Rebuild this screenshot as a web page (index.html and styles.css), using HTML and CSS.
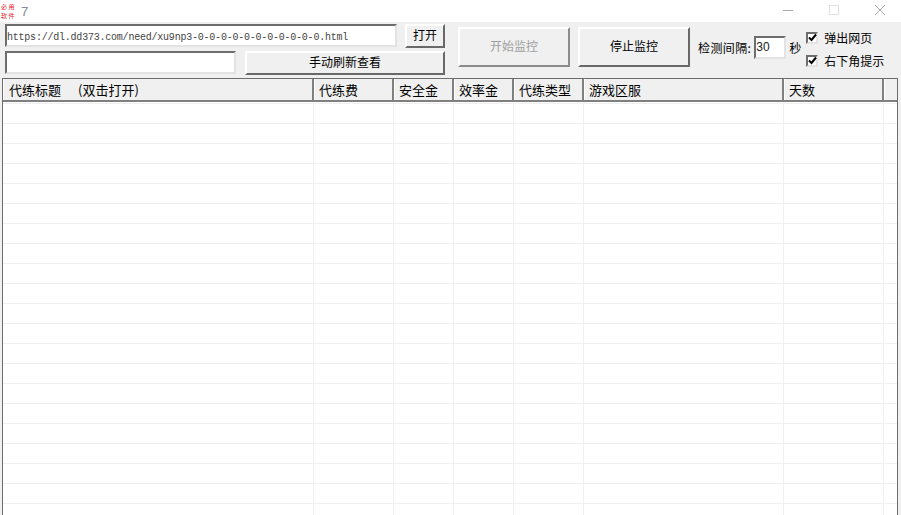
FILE: index.html
```html
<!DOCTYPE html>
<html lang="zh">
<head>
<meta charset="utf-8">
<title>7</title>
<link rel="stylesheet" href="styles.css">
</head>
<body>
<div class="window">
  <header class="titlebar">
    <div class="app-title">
      <div class="app-icon"><span>必用</span><span>软件</span></div>
      <span class="app-name">7</span>
    </div>
    <div class="caption">
      <svg width="12" height="12" viewBox="0 0 12 12" stroke="#a8a8a8" fill="none"><path d="M1 6.500h10"/></svg>
      <svg width="12" height="12" viewBox="0 0 12 12" stroke="#e0e0e0" fill="none"><rect x="1.500" y="1.500" width="9" height="9"/></svg>
      <svg width="12" height="12" viewBox="0 0 12 12" stroke="#a8a8a8" fill="none"><path d="M1 1l10 10M11 1L1 11"/></svg>
    </div>
  </header>

  <section class="toolbar">
    <div class="url-group">
      <div class="tool-row">
        <input class="field field-url" type="text" value="https://dl.dd373.com/need/xu9np3-0-0-0-0-0-0-0-0-0-0-0.html">
        <button class="btn btn-open">打开</button>
      </div>
      <div class="tool-row">
        <input class="field field-search" type="text">
        <button class="btn btn-refresh">手动刷新查看</button>
      </div>
    </div>
    <button class="btn btn-big btn-start" disabled>开始监控</button>
    <button class="btn btn-big btn-stop">停止监控</button>
    <div class="interval">
      <span class="interval-label">检测间隔:</span>
      <input class="field field-sec" type="text" value="30">
      <span>秒</span>
    </div>
    <div class="checks">
      <label class="check"><span class="box"><svg width="9" height="9" viewBox="0 0 9 9" fill="none" stroke="#000" stroke-width="2"><path d="M1 4.500l2.500 2.500L8 1.500"/></svg></span>弹出网页</label>
      <label class="check"><span class="box"><svg width="9" height="9" viewBox="0 0 9 9" fill="none" stroke="#000" stroke-width="2"><path d="M1 4.500l2.500 2.500L8 1.500"/></svg></span>右下角提示</label>
    </div>
  </section>

  <section class="list">
    <div class="list-head">
      <div class="hcell c1">代练标题　<span class="hint">(双击打开)</span></div>
      <div class="hcell c2">代练费</div>
      <div class="hcell c3">安全金</div>
      <div class="hcell c4">效率金</div>
      <div class="hcell c5">代练类型</div>
      <div class="hcell c6">游戏区服</div>
      <div class="hcell c7">天数</div>
      <div class="hcell c8"></div>
    </div>
    <div class="list-body"></div>
  </section>
</div>
</body>
</html>
```
FILE: styles.css
```css
* { box-sizing: border-box; }
html, body { margin: 0; height: 100%; overflow: hidden; }
body {
  font-family: "Noto Sans CJK SC", "Liberation Sans", sans-serif;
  font-size: 12px;
  color: #000;
  background: #f0f0f0;
}
.window { display: flex; flex-direction: column; height: 515px; }

.titlebar {
  height: 22px;
  background: #fff;
  display: flex;
  justify-content: space-between;
  align-items: center;
  flex: none;
}
.app-title { display: flex; align-items: center; padding-left: 1px; }
.app-icon {
  width: 16px;
  height: 18px;
  display: flex;
  flex-direction: column;
  color: #e8141c;
  font-size: 6px;
  line-height: 9px;
  letter-spacing: 1.500px;
  font-family: "Noto Sans CJK SC", sans-serif;
  text-align: left;
  white-space: nowrap;
}
.app-name { margin-left: 4px; font-size: 13px; color: #7f8a96; font-family: "Liberation Sans", sans-serif; }
.caption { display: flex; gap: 34px; padding-right: 15px; margin-top: -3px; }
.caption svg { display: block; }

.toolbar {
  height: 56px;
  flex: none;
  display: flex;
  padding: 2px 0 0 5px;
  background: #f0f0f0;
}
.url-group { width: 440px; display: flex; flex-direction: column; gap: 2px; }
.tool-row { display: flex; justify-content: space-between; height: 24px; }

.field {
  border: 2px solid;
  border-color: #6d6d6d #e3e3e3 #e3e3e3 #6d6d6d;
  background: #fff;
  padding: 3px 0 0 0;
  margin: 0;
  outline: 0;
  font-size: 10px;
  letter-spacing: -0.220px;
  font-family: "Liberation Mono", monospace;
  color: #444;
  height: 23px;
  border-radius: 0;
}
.field-url { width: 392px; }
.field-search { width: 231px; margin-top: 1px; }
.field-sec { width: 32px; height: 23px; font: 12px "Liberation Sans", sans-serif; letter-spacing: 0; color: #222; padding: 0; }

.btn {
  border: 2px solid;
  border-color: #fff #696969 #696969 #fff;
  background: #f0f0f0;
  padding: 0 0 3px;
  margin: 0;
  font-family: inherit;
  font-size: 12px;
  color: #000;
  border-radius: 0;
}
.btn-open { width: 40px; height: 24px; }
.btn-refresh { width: 200px; height: 24px; margin-top: 1px; }
.btn-big { width: 112px; height: 40px; margin-top: 3px; }
.btn-start { margin-left: 13px; color: #a0a0a0; border-color: #fff #8c8c8c #8c8c8c #fff; }
.btn-stop { margin-left: 8px; }

.interval { display: flex; align-items: center; height: 24px; margin: 11px 0 0 8px; }
.interval-label { letter-spacing: 0.400px; }
.interval .field-sec { margin: 0 3px 0 3px; }
.interval span { white-space: nowrap; }
.checks { display: flex; flex-direction: column; gap: 10px; margin: 7px 0 0 5px; }
.check { display: flex; align-items: center; height: 13px; white-space: nowrap; }
.box {
  width: 12px;
  height: 12px;
  border: 2px solid;
  border-color: #6d6d6d #e3e3e3 #e3e3e3 #6d6d6d;
  background: #fff;
  margin-right: 6px;
  display: flex;
  align-items: center;
  justify-content: center;
}
.box svg { display: block; flex: none; }

.list {
  flex: 1;
  min-height: 0;
  margin: 0 3px 0 2px;
  border: 1px solid #6d6d6d;
  border-bottom: 0;
  background: #fff;
  display: flex;
  flex-direction: column;
}
.list-head { display: flex; height: 23px; flex: none; background: #f0f0f0; border-bottom: 2px solid #808080; }
.hcell {
  height: 21px;
  line-height: 22px;
  padding-left: 4px;
  font-size: 13px;
  white-space: nowrap;
  border-right: 2px solid #808080;
  border-left: 1px solid #fff;
  flex: none;
}
.hint { margin-left: 4px; }
.c1 { width: 311px; padding-left: 5px; }
.c2 { width: 80px; }
.c3, .c4 { width: 60px; }
.c5 { width: 70px; }
.c6 { width: 200px; }
.c7 { width: 100px; }
.c8 { flex: 1; border-right: 0; }

.list-body {
  flex: 1;
  background-color: #fff;
  background-image:
    linear-gradient(#f0f0f0 1px, transparent 1px),
    linear-gradient(90deg, #f0f0f0 1px, transparent 1px),
    linear-gradient(90deg, #f0f0f0 1px, transparent 1px),
    linear-gradient(90deg, #f0f0f0 1px, transparent 1px),
    linear-gradient(90deg, #f0f0f0 1px, transparent 1px),
    linear-gradient(90deg, #f0f0f0 1px, transparent 1px),
    linear-gradient(90deg, #f0f0f0 1px, transparent 1px),
    linear-gradient(90deg, #f0f0f0 1px, transparent 1px);
  background-size: 100% 20px, 1px 100%, 1px 100%, 1px 100%, 1px 100%, 1px 100%, 1px 100%, 1px 100%;
  background-position: 0 1px, 310px 0, 390px 0, 450px 0, 510px 0, 580px 0, 780px 0, 880px 0;
  background-repeat: repeat-y, no-repeat, no-repeat, no-repeat, no-repeat, no-repeat, no-repeat, no-repeat;
}
```
